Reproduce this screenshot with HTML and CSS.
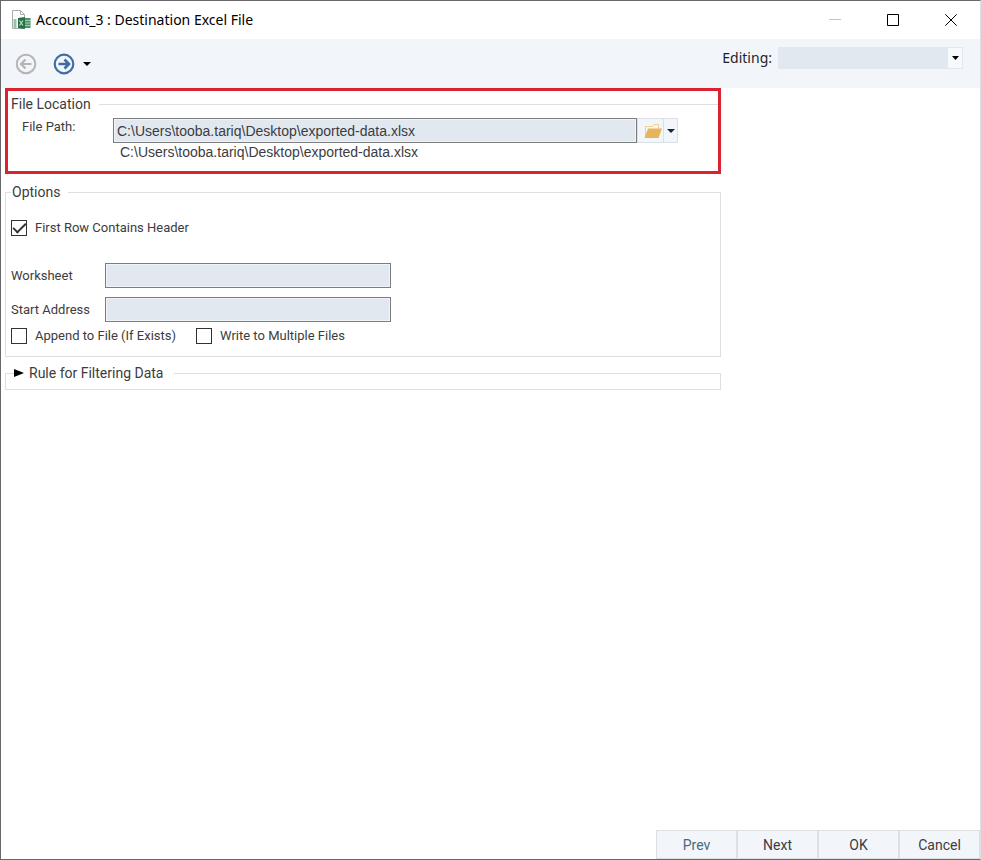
FILE: index.html
```html
<!DOCTYPE html>
<html lang="en">
<head>
    <meta charset="UTF-8">
    <meta name="viewport" content="width=device-width, initial-scale=1.0">
    <title>Account_3 : Destination Excel File</title>
    <link rel="stylesheet" href="styles.css">
</head>
<body>
    <div class="window">
        <header class="titlebar">
            <svg class="app-icon" width="20" height="20" viewBox="0 0 20 20">
                <path d="M1.500 .5h8l4 4v14h-12z" fill="#fff" stroke="#a9adab"/>
                <path d="M9.500 .5v4h4" fill="none" stroke="#a9adab"/>
                <path d="M13 8h6.500v10H13z" fill="#4d9268"/>
                <path d="M14 10.500h5M14 13h5M14 15.500h5" stroke="#a5ccb2"/>
                <path d="M4 9v10" stroke="#9dbfa9" stroke-width="3"/>
                <path d="M7 8l7-1v12l-7-1z" fill="#247245"/>
                <path d="M8.500 10.500l3.500 5M12 10.500l-3.500 5" stroke="#b9d6c3" stroke-width="1.300"/>
            </svg>
            <h1>Account_3 : Destination Excel File</h1>
            <div class="window-controls">
                <button type="button" aria-label="Minimize" disabled>
                    <svg width="12" height="12" viewBox="0 0 12 12"><path d="M0 5.500h12" stroke="#c4c4c4"/></svg>
                </button>
                <button type="button" aria-label="Maximize">
                    <svg width="12" height="12" viewBox="0 0 12 12"><path d="M.5 .5h11v11H.5z" fill="none" stroke="#000"/></svg>
                </button>
                <button type="button" aria-label="Close">
                    <svg width="12" height="12" viewBox="0 0 12 12"><path d="M.3 .3l11.400 11.400M11.700 .3L.3 11.700" stroke="#000"/></svg>
                </button>
            </div>
        </header>

        <div class="toolbar">
            <div class="nav">
                <button type="button" class="nav-back" aria-label="Back" disabled>
                    <svg width="22" height="22" viewBox="0 0 22 22" fill="none" stroke="currentColor">
                        <circle cx="11" cy="11" r="9.300" stroke-width="2"/>
                        <path d="M16.500 11H6.500M10.500 6.500L6 11l4.500 4.500" stroke-width="2.200"/>
                    </svg>
                </button>
                <button type="button" class="nav-forward" aria-label="Forward">
                    <svg width="22" height="22" viewBox="0 0 22 22" fill="none" stroke="currentColor">
                        <circle cx="11" cy="11" r="9.300" stroke-width="2.200"/>
                        <path d="M5.500 11h10M11.500 6.500L16 11l-4.500 4.500" stroke-width="2.600"/>
                    </svg>
                </button>
                <button type="button" class="nav-menu" aria-label="History">
                    <svg width="8" height="4" viewBox="0 0 8 4"><path d="M0 0h8L4 4z"/></svg>
                </button>
            </div>
            <div class="editing">
                <label for="editing">Editing:</label>
                <div class="select">
                    <select id="editing"><option></option></select>
                    <span class="select-arrow">
                        <svg width="7" height="4" viewBox="0 0 7 4"><path d="M0 0h7L3.500 4z"/></svg>
                    </span>
                </div>
            </div>
        </div>

        <main class="content">
            <section class="highlight">
                <fieldset class="group location">
                    <legend>File Location</legend>
                    <div class="path-row">
                        <label for="filePath">File Path:</label>
                        <input type="text" id="filePath" class="path" value="C:\Users\tooba.tariq\Desktop\exported-data.xlsx">
                        <button type="button" class="browse" aria-label="Browse">
                            <svg width="20" height="16" viewBox="0 0 20 16">
                                <path d="M2.500 14V3.500h7l1.500-2h4.500v4" fill="#fff8e6" stroke="#efd08f"/>
                                <path d="M5 5.500h14L15.500 15H1.500z" fill="#e5b45c"/>
                            </svg>
                        </button>
                        <button type="button" class="browse-menu" aria-label="Browse options">
                            <svg width="8" height="4" viewBox="0 0 8 4"><path d="M0 0h8L4 4z" fill="#1b2540"/></svg>
                        </button>
                    </div>
                    <p class="path resolved-path">C:\Users\tooba.tariq\Desktop\exported-data.xlsx</p>
                </fieldset>
            </section>

            <fieldset class="group options">
                <legend>Options</legend>
                <label class="check"><input type="checkbox" checked> First Row Contains Header</label>
                <div class="fields">
                    <label for="worksheet">Worksheet</label>
                    <input type="text" id="worksheet">
                    <label for="startAddress">Start Address</label>
                    <input type="text" id="startAddress">
                </div>
                <div class="checks">
                    <label class="check"><input type="checkbox"> Append to File (If Exists)</label>
                    <label class="check"><input type="checkbox"> Write to Multiple Files</label>
                </div>
            </fieldset>

            <fieldset class="group rule">
                <legend>
                    <button type="button" class="expander" aria-expanded="false">
                        <svg width="10" height="8" viewBox="0 0 10 8"><path d="M0 0l10 4-10 4z"/></svg>
                        Rule for Filtering Data
                    </button>
                </legend>
            </fieldset>
        </main>

        <footer class="footer">
            <button type="button" class="prev">Prev</button>
            <button type="button">Next</button>
            <button type="button">OK</button>
            <button type="button">Cancel</button>
        </footer>
    </div>
</body>
</html>
```
FILE: styles.css
```css
:root {
    --bar-color: #f2f6fa;
    --field-color: #e1e8f0;
    --line-color: #dcdfe3;
    --text-color: #3c3c40;
    --highlight-color: #d9232e;
}

* {
    margin: 0;
    padding: 0;
    box-sizing: border-box;
}

body {
    font-family: Roboto, "Liberation Sans", sans-serif;
    font-size: 14px;
    line-height: 18px;
    color: var(--text-color);
    background-color: white;
}

button,
input,
select {
    font: inherit;
    color: inherit;
    border: none;
    background: none;
}

svg {
    display: block;
}

.window {
    display: flex;
    flex-direction: column;
    min-height: 100vh;
    border: 1px solid #68686c;
    border-right-color: var(--line-color);
}

/* Title bar */
.titlebar {
    display: flex;
    align-items: center;
    height: 38px;
    padding-left: 10px;
}

.titlebar h1 {
    margin-left: 5px;
    font-family: "Noto Sans", "Open Sans", sans-serif;
    font-size: 14px;
    font-weight: 400;
    color: black;
}

.window-controls {
    display: flex;
    align-self: stretch;
    margin-left: auto;
}

.window-controls button {
    display: grid;
    place-items: center;
    width: 58px;
}

/* Toolbar */
.toolbar {
    display: flex;
    justify-content: space-between;
    align-items: flex-start;
    height: 49px;
    padding: 8px 17px 0 14px;
    background-color: var(--bar-color);
}

.nav {
    display: flex;
    align-items: center;
    padding-top: 6px;
}

.nav-back {
    color: #b4b4b4;
}

.nav-forward {
    margin-left: 16px;
    color: #3e6da5;
}

.nav-menu {
    padding: 8px;
}

.editing {
    display: flex;
    align-items: center;
    gap: 6px;
}

.editing label {
    font-family: "Noto Sans", "Open Sans", sans-serif;
    color: #1f1f28;
}

.select {
    position: relative;
}

.select select {
    display: block;
    appearance: none;
    width: 185px;
    height: 22px;
    background-color: var(--field-color);
}

.select-arrow {
    position: absolute;
    top: 1px;
    right: 1px;
    bottom: 1px;
    display: grid;
    place-items: center;
    width: 14px;
    background-color: #f7f9fb;
    pointer-events: none;
}

/* Form */
.content {
    flex: 1;
    width: 100%;
    max-width: 720px;
    padding-left: 4px;
}

.highlight {
    padding: 4px 0 10px;
    border: 3px solid var(--highlight-color);
}

.group {
    min-width: 0;
    border: 1px solid var(--line-color);
}

.group label {
    font-size: 13px;
}

.group input[type="text"] {
    height: 25px;
    padding: 0 3px;
    background-color: var(--field-color);
    border: 1px solid #7c7c7c;
    box-shadow: inset 0 0 0 1px #f2f5f8;
}

.group .path {
    font-family: "Liberation Sans", Arial, sans-serif;
    font-size: 14px;
}

.location {
    border-width: 1px 0 0;
}

.location legend {
    padding: 0 8px 0 3px;
}

.path-row {
    display: flex;
    padding: 5px 40px 0 14px;
}

.path-row label {
    width: 91px;
}

.path-row input {
    flex: 1;
    min-width: 0;
}

.browse,
.browse-menu {
    display: grid;
    place-items: center;
    background-color: var(--bar-color);
    border: 1px solid var(--line-color);
}

.browse {
    width: 27px;
    padding-left: 5px;
}

.browse-menu {
    width: 14px;
    border-left: none;
}

.resolved-path {
    padding-left: 112px;
}

.options {
    margin-top: 9px;
    padding: 18px 5px 11px;
}

.options legend {
    padding: 0 8px 0 1px;
}

.check {
    display: flex;
    align-items: center;
    gap: 8px;
}

.check input {
    display: grid;
    place-items: center;
    appearance: none;
    width: 16px;
    height: 16px;
    border: 1px solid #333333;
    background-color: white;
}

.check input:checked::before {
    content: "";
    width: 11px;
    height: 5px;
    border: solid #333333;
    border-width: 0 0 2px 2px;
    transform: translateY(-2px) rotate(-45deg);
}

.fields {
    display: grid;
    grid-template-columns: 94px minmax(0, 286px);
    row-gap: 9px;
    align-items: center;
    margin: 26px 0 5px;
}

.checks {
    display: flex;
    gap: 20px;
}

.rule {
    margin-top: 7px;
    padding: 0 8px 7px;
}

.rule legend {
    padding-right: 11px;
}

.expander {
    display: flex;
    align-items: center;
    gap: 5px;
}

/* Footer */
.footer {
    display: flex;
    justify-content: flex-end;
}

.footer button {
    width: 81px;
    height: 29px;
    background-color: var(--bar-color);
    border: 1px solid var(--line-color);
}

.footer .prev {
    color: #4c6880;
}
```
